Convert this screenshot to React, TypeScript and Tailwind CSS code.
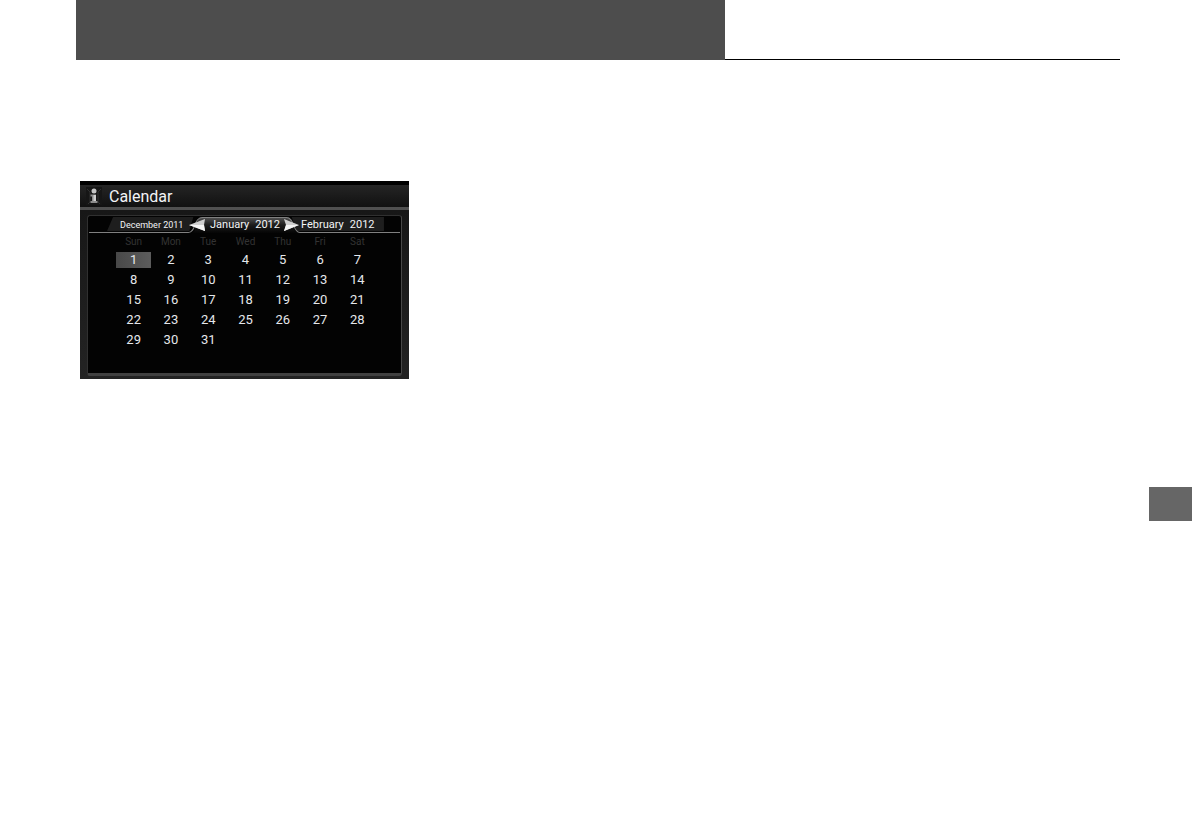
const days = ["Sun", "Mon", "Tue", "Wed", "Thu", "Fri", "Sat"];

const weeks = [
    [1, 2, 3, 4, 5, 6, 7],
    [8, 9, 10, 11, 12, 13, 14],
    [15, 16, 17, 18, 19, 20, 21],
    [22, 23, 24, 25, 26, 27, 28],
    [29, 30, 31],
];

const InfoIcon = () => (
    <svg width="16" height="18" viewBox="0 0 16 18" aria-hidden="true">
        <rect width="16" height="18" fill="#161616" />
        <path d="M1 2l3 3v10l-2 2M15 2l-3 3v10l2 2" fill="none" stroke="#303030" />
        <circle cx="8" cy="4" r="2.500" fill="#c4c4c4" />
        <path d="M4.500 7.500H10V14h1.500v2h-7v-2H6V9.500H4.500z" fill="#8c8c8c" />
        <path d="M7.500 8H10v6H7.500z" fill="#cfcfcf" />
    </svg>
);

const Arrow = ({ next }: { next?: boolean }) => (
    <svg width="17" height="12" viewBox="0 0 17 12" aria-hidden="true">
        <path d={next ? "M0 0l15 6-15 6 2-6z" : "M16 0L0 6l16 6-1-6z"} fill="#cfcfcf" />
        <path d={next ? "M2 6h13L0 12z" : "M0 6h15l1 6z"} fill="#f4f4f4" />
    </svg>
);

// Raised outline around the current month
const TabOutline = () => (
    <svg className="absolute inset-0 h-full w-full" viewBox="0 0 312 18" preserveAspectRatio="none" aria-hidden="true">
        <defs>
            <linearGradient id="raised" x1="0" y1="0" x2="0" y2="1">
                <stop offset="0" stopColor="#555" />
                <stop offset="0.5" stopColor="#1c1c1c" />
                <stop offset="1" stopColor="#050505" />
            </linearGradient>
        </defs>
        <path d="M25 1h80l-4 14H19zM203 1h92v14h-87z" fill="#1e1e1e" />
        <path d="M104 17c5-2 3-16 10-16h84c7 0 5 14 11 16z" fill="url(#raised)" />
        <path d="M1 16.500h99c8 0 5-15 14-15h84c8 0 6 15 13 15h100" fill="none" stroke="#808080" />
    </svg>
);

const MonthTabs = () => (
    <nav aria-label="Month" className="relative flex h-[18px] items-center whitespace-nowrap text-[11px] leading-4 text-gray-100">
        <TabOutline />
        <button className="relative w-[101px] pl-8 text-left text-[9px]">December 2011</button>
        <button className="relative w-[17px]" aria-label="Previous month"><Arrow /></button>
        <button className="relative flex w-[78px] justify-center gap-1.5" aria-current="true">
            <span>January</span><span>2012</span>
        </button>
        <button className="relative w-[17px]" aria-label="Next month"><Arrow next /></button>
        <button className="relative flex gap-1.5">
            <span>February</span><span>2012</span>
        </button>
    </nav>
);

const Calendar = () => (
    <section className="w-[329px] bg-linear-to-b from-[#151515] to-[#232323] pb-[3px] font-[Roboto,sans-serif]">
        <header className="flex h-[29px] items-center gap-[7px] border-t-4 border-b-3 border-t-black border-b-[#505050] bg-linear-to-b from-[#252525] to-[#111] pl-1.5">
            <InfoIcon />
            <h1 className="pt-px text-base leading-5 text-gray-100">Calendar</h1>
        </header>
        <div className="mx-[7px] mt-[5px] h-[161px] rounded-[3px] border border-b-[3px] border-[#303030] border-r-[#484848] border-b-[#414141] bg-[#030303]">
            <MonthTabs />
            <table className="ml-[27px] w-[261px] table-fixed border-collapse text-center text-[13px] leading-4 text-gray-200">
                <thead>
                    <tr className="h-4 text-[10px] leading-3 text-[#333]">
                        {days.map((day) => <th key={day} className="p-0 font-normal">{day}</th>)}
                    </tr>
                </thead>
                <tbody>
                    {weeks.map((week) => (
                        <tr key={week[0]} className="h-5">
                            {week.map((date) => (
                                <td key={date} className="p-0">
                                    <button className={date === 1 ? "block mx-auto h-4 w-[35px] bg-linear-to-r from-[#484848] to-[#5c5c5c]" : "block mx-auto h-4 w-[35px]"}>
                                        {date}
                                    </button>
                                </td>
                            ))}
                        </tr>
                    ))}
                </tbody>
            </table>
        </div>
    </section>
);

const App = () => {
    return (
        <div className="min-h-screen bg-white">
            <div className="mr-[72px] ml-[76px] grid h-[60px] grid-cols-[649fr_395fr]">
                <div className="bg-[#4d4d4d]" />
                <div className="border-b border-black" />
            </div>
            <main className="flex items-start justify-between pt-[121px] pl-20">
                <Calendar />
                <div className="mt-[306px] h-[34px] w-[43px] bg-[#666]" />
            </main>
        </div>
    );
};

export default App;
